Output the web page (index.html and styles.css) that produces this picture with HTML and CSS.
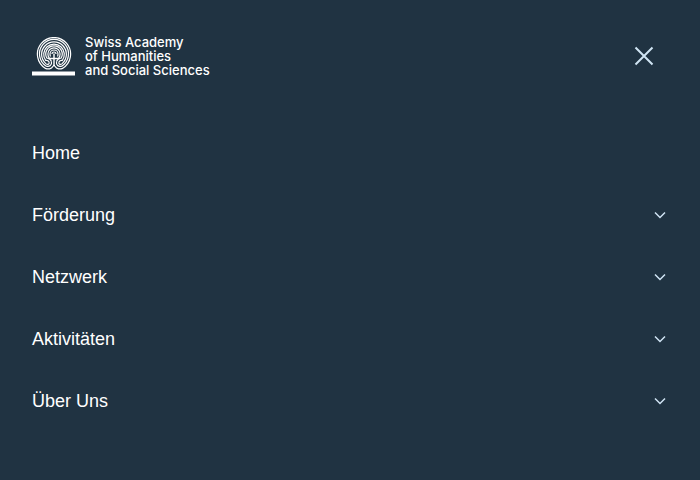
FILE: index.html
```html
<!DOCTYPE html>
<html lang="de">
<head>
<meta charset="utf-8">
<meta name="viewport" content="width=device-width, initial-scale=1">
<title>Swiss Academy of Humanities and Social Sciences</title>
<link rel="stylesheet" href="styles.css">
</head>
<body>
<header class="header">
  <a class="brand" href="#">
    <svg class="brand-mark" viewBox="0 0 43 39" aria-hidden="true">
      <g fill="none" stroke="currentColor" stroke-width="1.2">
        <path stroke-width="1.4" d="M22 16.500V29M16.500 21.500H27.500"/>
        <path d="M22 28C21.800 28.600 21.300 28.800 20.800 29.500C19.500 32 16 32.500 13.500 31.400A16.600 16.600 0 1 1 30.500 31.400C28 32.500 24.500 32 23.200 29.500C22.700 28.800 22.200 28.600 22 28"/>
        <path d="M19.500 24.500C20 28 17.500 30.200 14.300 29.200A14.500 14.500 0 1 1 29.700 29.200C26.500 30.200 24 28 24.500 24.500"/>
        <path d="M17.300 25.500C17.300 27.500 15.500 28 13.800 26.600A12.400 12.400 0 1 1 30.200 26.600C28.500 28 26.700 27.500 26.700 25.500"/>
        <path d="M17.300 25.500C16.800 23.500 15.200 23.300 13.700 23.500A10.300 10.300 0 1 1 30.300 23.500C28.800 23.300 27.200 23.500 26.700 25.500"/>
        <path d="M19.500 24.500C18.500 22 17 21.300 14.800 21A8.200 8.200 0 1 1 29.200 21C27 21.300 25.500 22 24.500 24.500"/>
        <path d="M17.500 21.500Q15.900 19.500 15.900 17A6.100 6.100 0 0 1 28.100 17Q28.100 19.500 26.500 21.500"/>
        <path d="M18.500 19.500Q18 18.500 18 17A4 4 0 0 1 26 17Q26 18.500 25.500 19.500"/>
        <path d="M20 17A2 2 0 0 1 24 17"/>
      </g>
      <path fill="currentColor" d="M0 34.500H43V38.500H0Z"/>
    </svg>
    <span class="brand-name">Swiss Academy<br>of Humanities<br>and Social Sciences</span>
  </a>
  <button class="close" type="button" aria-label="Menü schliessen">
    <svg class="close-icon" viewBox="0 0 20 20" aria-hidden="true"><path d="M1.500 1.500L18.500 18.500M18.500 1.500L1.500 18.500"/></svg>
  </button>
</header>
<nav class="menu" aria-label="Hauptmenü">
  <a class="menu-item" href="#">Home</a>
  <button class="menu-item" type="button">Förderung<svg class="chevron" viewBox="0 0 12 8" aria-hidden="true"><path d="M1 1.500L6 6.500L11 1.500"/></svg></button>
  <button class="menu-item" type="button">Netzwerk<svg class="chevron" viewBox="0 0 12 8" aria-hidden="true"><path d="M1 1.500L6 6.500L11 1.500"/></svg></button>
  <button class="menu-item" type="button">Aktivitäten<svg class="chevron" viewBox="0 0 12 8" aria-hidden="true"><path d="M1 1.500L6 6.500L11 1.500"/></svg></button>
  <button class="menu-item" type="button">Über Uns<svg class="chevron" viewBox="0 0 12 8" aria-hidden="true"><path d="M1 1.500L6 6.500L11 1.500"/></svg></button>
</nav>
</body>
</html>
```
FILE: styles.css
```css
* {
  box-sizing: border-box;
}

body {
  margin: 0;
  background: #203342;
  color: #fff;
  font-family: "Liberation Sans", Arial, sans-serif;
}

a {
  color: inherit;
  text-decoration: none;
}

button {
  padding: 0;
  border: 0;
  background: none;
  color: inherit;
  font: inherit;
  cursor: pointer;
}

.header {
  display: flex;
  align-items: center;
  justify-content: space-between;
  padding: 32px 32px 0;
}

.brand {
  display: flex;
  align-items: center;
  gap: 10px;
}

.brand-mark {
  width: 43px;
  height: 39px;
}

.brand-name {
  font-family: Inter, "Liberation Sans", sans-serif;
  font-size: 13px;
  font-weight: 500;
  line-height: 14px;
}

.close {
  display: grid;
  place-items: center;
  width: 48px;
  height: 48px;
}

.close-icon {
  width: 20px;
  height: 20px;
}

.close-icon path,
.chevron path {
  fill: none;
  stroke: #d0e5f4;
  stroke-width: 2;
}

.menu {
  display: flex;
  flex-direction: column;
  padding: 42px 32px;
}

.menu-item {
  display: flex;
  align-items: center;
  justify-content: space-between;
  height: 62px;
  font-size: 18px;
  text-align: left;
}

.chevron {
  width: 12px;
  height: 8px;
  margin-right: 2px;
}

.chevron path {
  stroke-width: 1.5;
}
```
